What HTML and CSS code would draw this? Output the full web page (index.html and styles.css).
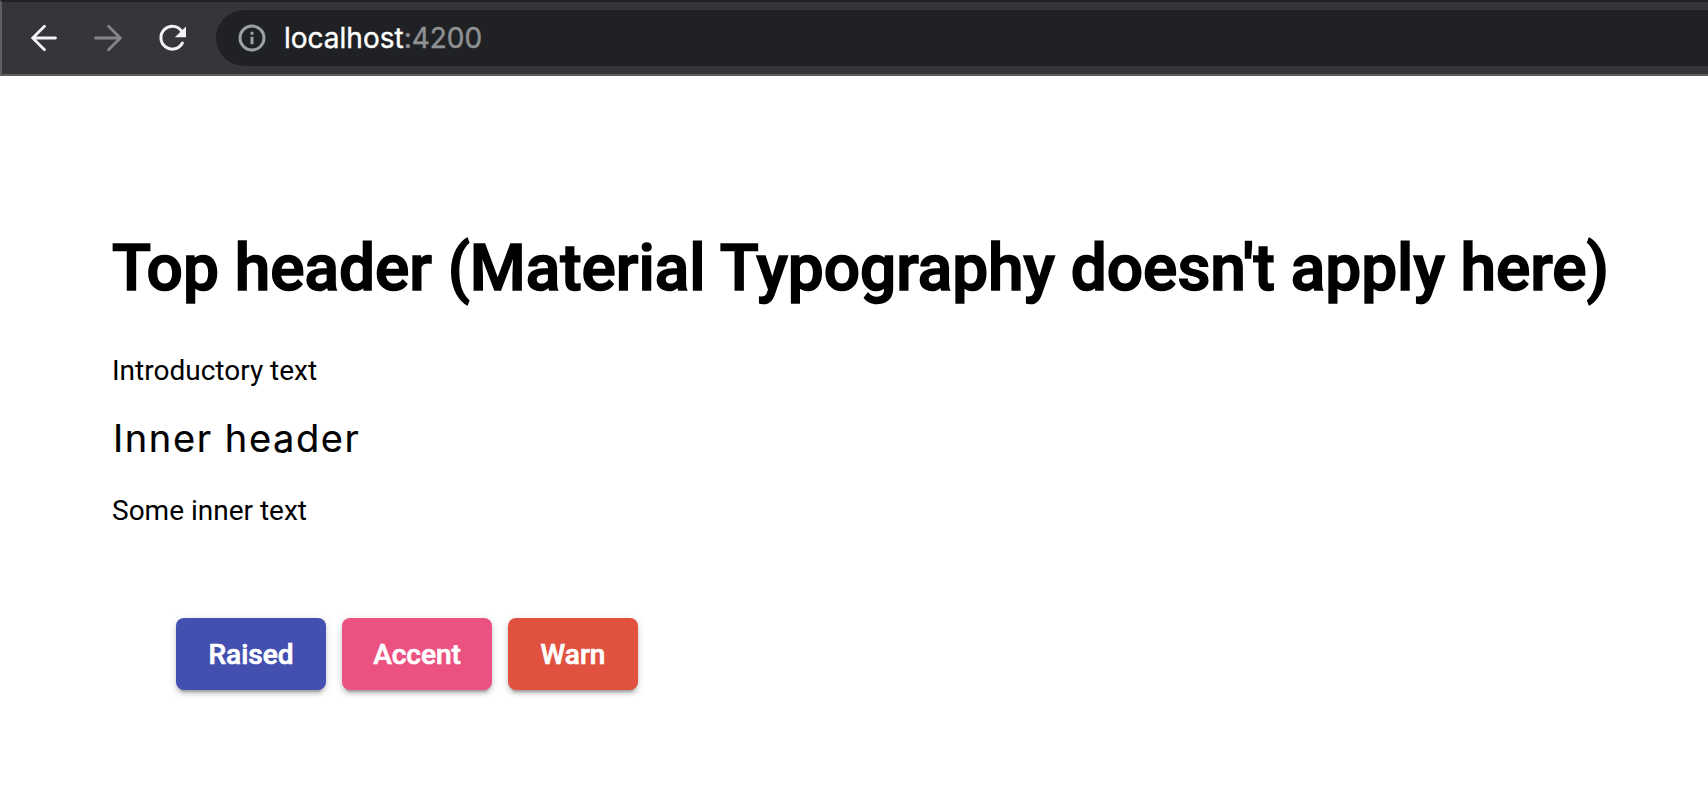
FILE: index.html
```
<!DOCTYPE html>
<html lang="en">
<head>
<meta charset="utf-8">
<title>localhost:4200</title>
<link rel="stylesheet" href="styles.css">
</head>
<body>
<header class="toolbar">
  <svg class="icon back" width="32" height="32" viewBox="0 0 32 32"><path d="M27.500 16H5M16.500 4.200L4.700 16l11.800 11.800"/></svg>
  <svg class="icon forward" width="32" height="32" viewBox="0 0 32 32"><path d="M4.500 16H27M17.500 4.200L29.300 16l-11.800 11.800"/></svg>
  <svg class="icon reload" width="32" height="32" viewBox="0 0 32 32"><path d="M25.800 8.400A11.400 11.400 0 1 0 26.400 20"/><path class="head" d="M30 3.500v10.800H18.800z"/></svg>
  <div class="address">
    <svg class="info" width="28" height="28" viewBox="0 0 28 28"><circle cx="14" cy="14" r="12"/><path d="M14 12.700v7.500M14 7.700v3"/></svg>
    <span class="url"><span class="host">localhost</span><span class="port">:4200</span></span>
  </div>
</header>
<main class="page">
  <h1 class="title">Top header (Material Typography doesn't apply here)</h1>
  <p class="text">Introductory text</p>
  <h2 class="subtitle">Inner header</h2>
  <p class="text">Some inner text</p>
  <div class="buttons">
    <button class="button primary">Raised</button>
    <button class="button accent">Accent</button>
    <button class="button warn">Warn</button>
  </div>
</main>
</body>
</html>
```
FILE: styles.css
```
* { box-sizing: border-box; }
body {
  margin: 0;
  background: #fff;
  color: #000;
  font-family: Roboto, sans-serif;
  height: 790px;
  overflow: hidden;
}
.toolbar {
  display: flex;
  align-items: center;
  height: 76px;
  padding-left: 26px;
  background: #35363a;
  border-top: 2px solid #202124;
  border-bottom: 2px solid #5f5e63;
  border-left: 2px solid #5f5e63;
}
.icon {
  flex: none;
  margin-right: 32px;
  fill: none;
  stroke: #f1f3f4;
  stroke-width: 2.8;
}
.back, .forward { stroke-linecap: round; }
.forward { stroke: #85868a; margin-left: -1px; }
.reload { stroke-width: 3; margin: 1px 28px 0 1px; stroke-linecap: round; }
.head { fill: #f1f3f4; stroke: none; }
.address {
  display: flex;
  align-items: center;
  flex: 1;
  height: 56px;
  padding-left: 22px;
  border-radius: 28px 0 0 28px;
  background: #202124;
}
.info { fill: none; stroke: #9aa0a6; stroke-width: 3; }
.url {
  margin-left: 18px;
  font: 28px/40px Inter, sans-serif;
  -webkit-text-stroke: 0.4px;
}
.host { color: #fff; }
.port { color: #8f9193; }
.page { padding: 151px 112px 0; }
.title {
  margin: 0;
  font-size: 64px;
  font-weight: 500;
  line-height: 84px;
  letter-spacing: -0.03px;
  white-space: nowrap;
  -webkit-text-stroke: 1.6px #000;
}
.text {
  margin: 0;
  font-size: 28px;
  line-height: 40px;
}
.title + .text { margin-top: 40px; }
.subtitle {
  margin: 19px 0 0;
  padding-left: 1px;
  font: 400 38px/56px Inter, sans-serif;
  letter-spacing: 1.6px;
  -webkit-text-stroke: 0.2px #000;
}
.subtitle + .text { margin-top: 25px; }
.buttons {
  display: flex;
  gap: 16px;
  padding: 87px 64px 0;
}
.button {
  height: 72px;
  padding: 1px 0 0;
  border: 0;
  border-radius: 8px;
  color: #fff;
  font: 500 28px/71px Roboto, sans-serif;
  -webkit-text-stroke: 0.7px #fff;
  box-shadow: 0 6px 2px -4px rgba(0,0,0,.2), 0 4px 4px rgba(0,0,0,.14), 0 2px 10px rgba(0,0,0,.12);
}
.primary { width: 150px; background: #4350af; }
.accent { width: 150px; background: #eb5181; }
.warn { width: 130px; background: #e05140; }
```
